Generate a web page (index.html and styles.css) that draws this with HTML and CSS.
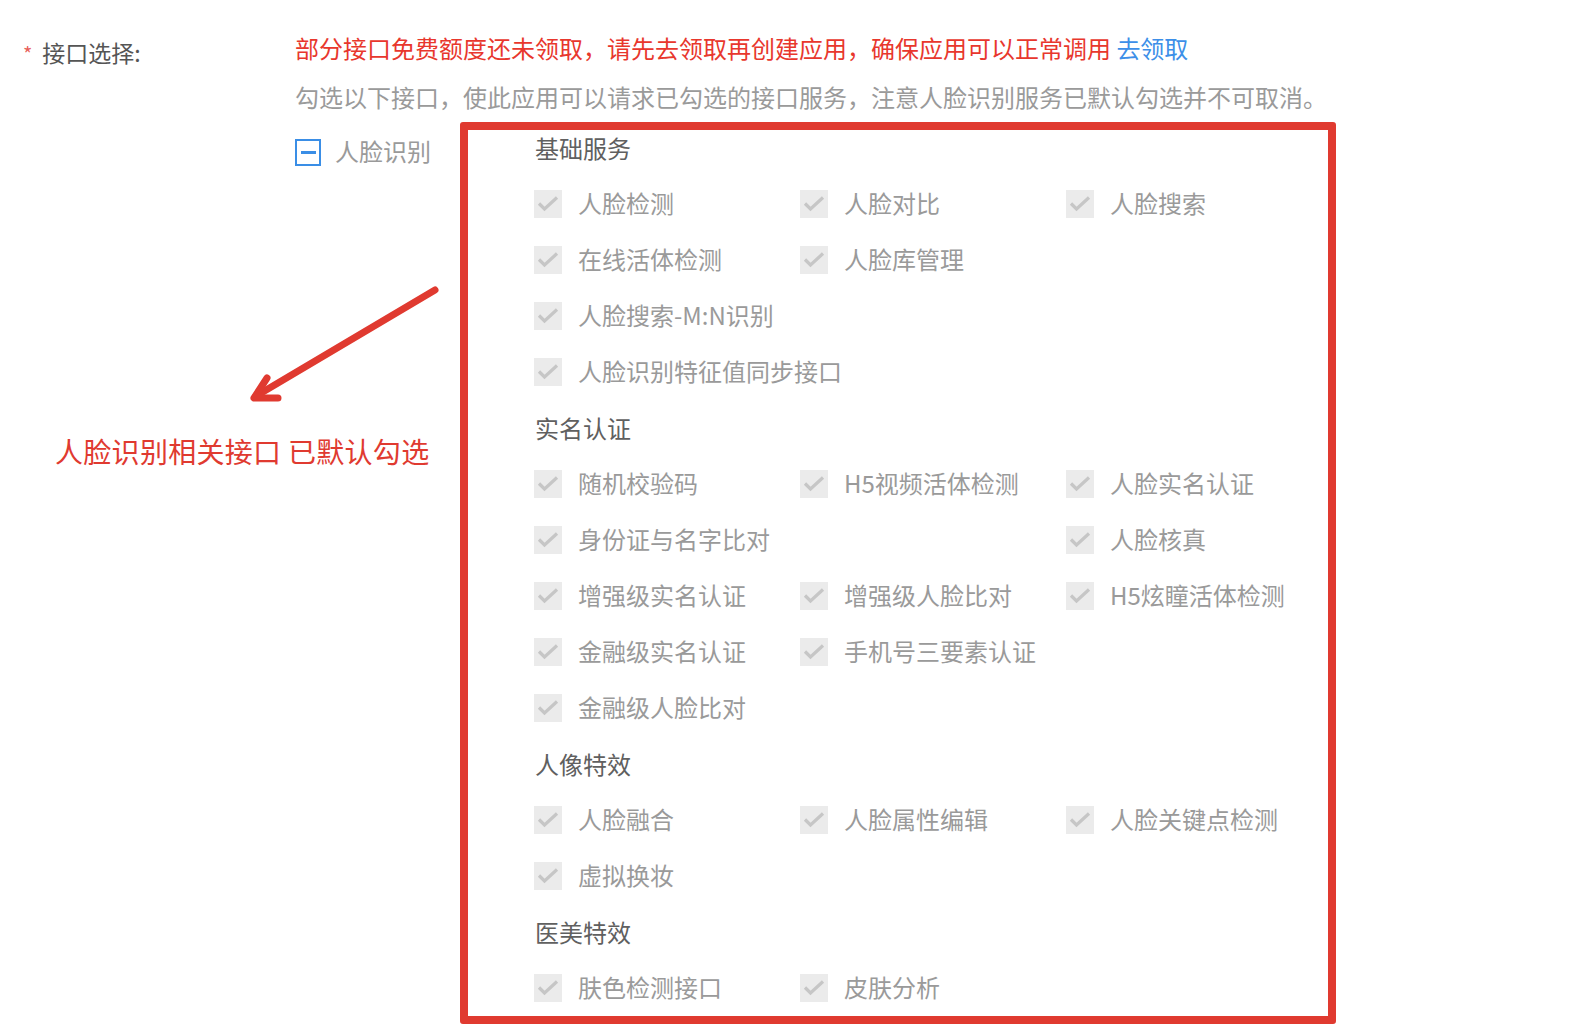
FILE: index.html
```html
<!DOCTYPE html>
<html>
<head>
    <meta charset="utf-8">
    <link rel="stylesheet" href="styles.css">
</head>
<body>
    <div class="form-row">
        <div class="form-label">
            <div class="label-text"><span class="required">*</span>接口选择:</div>
            <div class="note">人脸识别相关接口 已默认勾选</div>
        </div>

        <div class="form-content">
            <div class="notice">部分接口免费额度还未领取，请先去领取再创建应用，确保应用可以正常调用 <a class="link">去领取</a></div>
            <div class="desc">勾选以下接口，使此应用可以请求已勾选的接口服务，注意人脸识别服务已默认勾选并不可取消。</div>

            <div class="api-row">
                <div class="parent-check">
                    <span class="box-indeterminate"><span class="dash"></span></span>
                    <span class="parent-name">人脸识别</span>
                </div>

                <div class="api-panel">
                    <div class="group-title first">基础服务</div>
                    <div class="group">
                        <div class="item"><span class="cb"></span>人脸检测</div>
                        <div class="item"><span class="cb"></span>人脸对比</div>
                        <div class="item"><span class="cb"></span>人脸搜索</div>
                        <div class="item"><span class="cb"></span>在线活体检测</div>
                        <div class="item"><span class="cb"></span>人脸库管理</div>
                        <div class="item empty"></div>
                        <div class="item"><span class="cb"></span>人脸搜索-M:N识别</div>
                        <div class="item empty"></div>
                        <div class="item empty"></div>
                        <div class="item"><span class="cb"></span>人脸识别特征值同步接口</div>
                    </div>

                    <div class="group-title">实名认证</div>
                    <div class="group">
                        <div class="item"><span class="cb"></span>随机校验码</div>
                        <div class="item"><span class="cb"></span>H5视频活体检测</div>
                        <div class="item"><span class="cb"></span>人脸实名认证</div>
                        <div class="item"><span class="cb"></span>身份证与名字比对</div>
                        <div class="item empty"></div>
                        <div class="item"><span class="cb"></span>人脸核真</div>
                        <div class="item"><span class="cb"></span>增强级实名认证</div>
                        <div class="item"><span class="cb"></span>增强级人脸比对</div>
                        <div class="item"><span class="cb"></span>H5炫瞳活体检测</div>
                        <div class="item"><span class="cb"></span>金融级实名认证</div>
                        <div class="item"><span class="cb"></span>手机号三要素认证</div>
                        <div class="item empty"></div>
                        <div class="item"><span class="cb"></span>金融级人脸比对</div>
                    </div>

                    <div class="group-title">人像特效</div>
                    <div class="group">
                        <div class="item"><span class="cb"></span>人脸融合</div>
                        <div class="item"><span class="cb"></span>人脸属性编辑</div>
                        <div class="item"><span class="cb"></span>人脸关键点检测</div>
                        <div class="item"><span class="cb"></span>虚拟换妆</div>
                    </div>

                    <div class="group-title">医美特效</div>
                    <div class="group">
                        <div class="item"><span class="cb"></span>肤色检测接口</div>
                        <div class="item"><span class="cb"></span>皮肤分析</div>
                    </div>
                </div>
            </div>
        </div>
    </div>

    <!-- annotation arrow -->
    <svg class="arrow" width="200" height="130" viewBox="0 0 200 130">
        <g fill="none" stroke="#e03a30" stroke-width="7" stroke-linecap="round" stroke-linejoin="round">
            <line x1="195" y1="6" x2="16" y2="112"/>
            <polyline points="27,94 14,114 38,114"/>
        </g>
    </svg>

    <script>
        // fill every checked box with the same tick
        const tick = '<svg width="28" height="28" viewBox="0 0 28 28"><polyline points="5,13.5 10.5,19 23,7.5" fill="none" stroke="#c6c6c6" stroke-width="3.2"/></svg>';
        document.querySelectorAll('.cb').forEach(cb => cb.innerHTML = tick);
    </script>
</body>
</html>
```

FILE: styles.css
```css
body {
    margin: 0;
    padding: 0;
    background: #fff;
    font-family: "Noto Sans CJK SC", "Noto Sans", sans-serif;
    font-size: 24px;
    position: relative;
    min-height: 1034px;
}

.form-row {
    display: flex;
}

.form-label {
    width: 272px;
    padding-left: 23px;
    padding-top: 28px;
}
.label-text {
    color: #555;
    line-height: 48px;
    font-size: 23px;
}
.required {
    color: #e8615a;
    font-size: 20px;
    margin-right: 10px;
}
.note {
    margin-top: 353px;
    margin-left: 32px;
    line-height: 40px;
    font-size: 28px;
    letter-spacing: 0.3px;
    color: #e03a30;
    white-space: nowrap;
}

.form-content {
    padding-top: 24px;
}
.notice {
    color: #e8372d;
    line-height: 48px;
}
.link {
    color: #3d8fe8;
    cursor: pointer;
}
.desc {
    color: #9a9a9a;
    line-height: 50px;
}

.api-row {
    display: flex;
}
.parent-check {
    width: 165px;
    display: flex;
    align-items: center;
    height: 28px;
    margin-top: 16px;
    color: #9a9a9a;
}
.parent-name {
    margin-bottom: 4px;
}
.box-indeterminate {
    width: 26px;
    height: 27px;
    box-sizing: border-box;
    border: 2px solid #3a8ee6;
    display: flex;
    align-items: center;
    justify-content: center;
    margin-right: 14px;
}
.dash {
    width: 15px;
    height: 3px;
    background: #3a8ee6;
}

.api-panel {
    width: 876px;
    box-sizing: border-box;
    border: 8px solid #e03a30;
    border-radius: 3px;
    padding: 2px 0 0 66px;
}
.group-title {
    color: #606060;
    line-height: 32px;
    margin-top: 12px;
    margin-bottom: 12px;
    padding-left: 1px;
}
.group-title.first {
    margin-top: 0;
}
.group {
    display: grid;
    grid-template-columns: 266px 266px 266px;
}
.item {
    height: 56px;
    box-sizing: border-box;
    padding-bottom: 4px;
    display: flex;
    align-items: center;
    color: #9a9a9a;
    white-space: nowrap;
}
.cb {
    width: 28px;
    height: 28px;
    background: #ebebeb;
    margin-top: 4px;
    margin-right: 16px;
    display: block;
}
.cb svg {
    display: block;
}

.arrow {
    position: absolute;
    left: 240px;
    top: 284px;
}
```
